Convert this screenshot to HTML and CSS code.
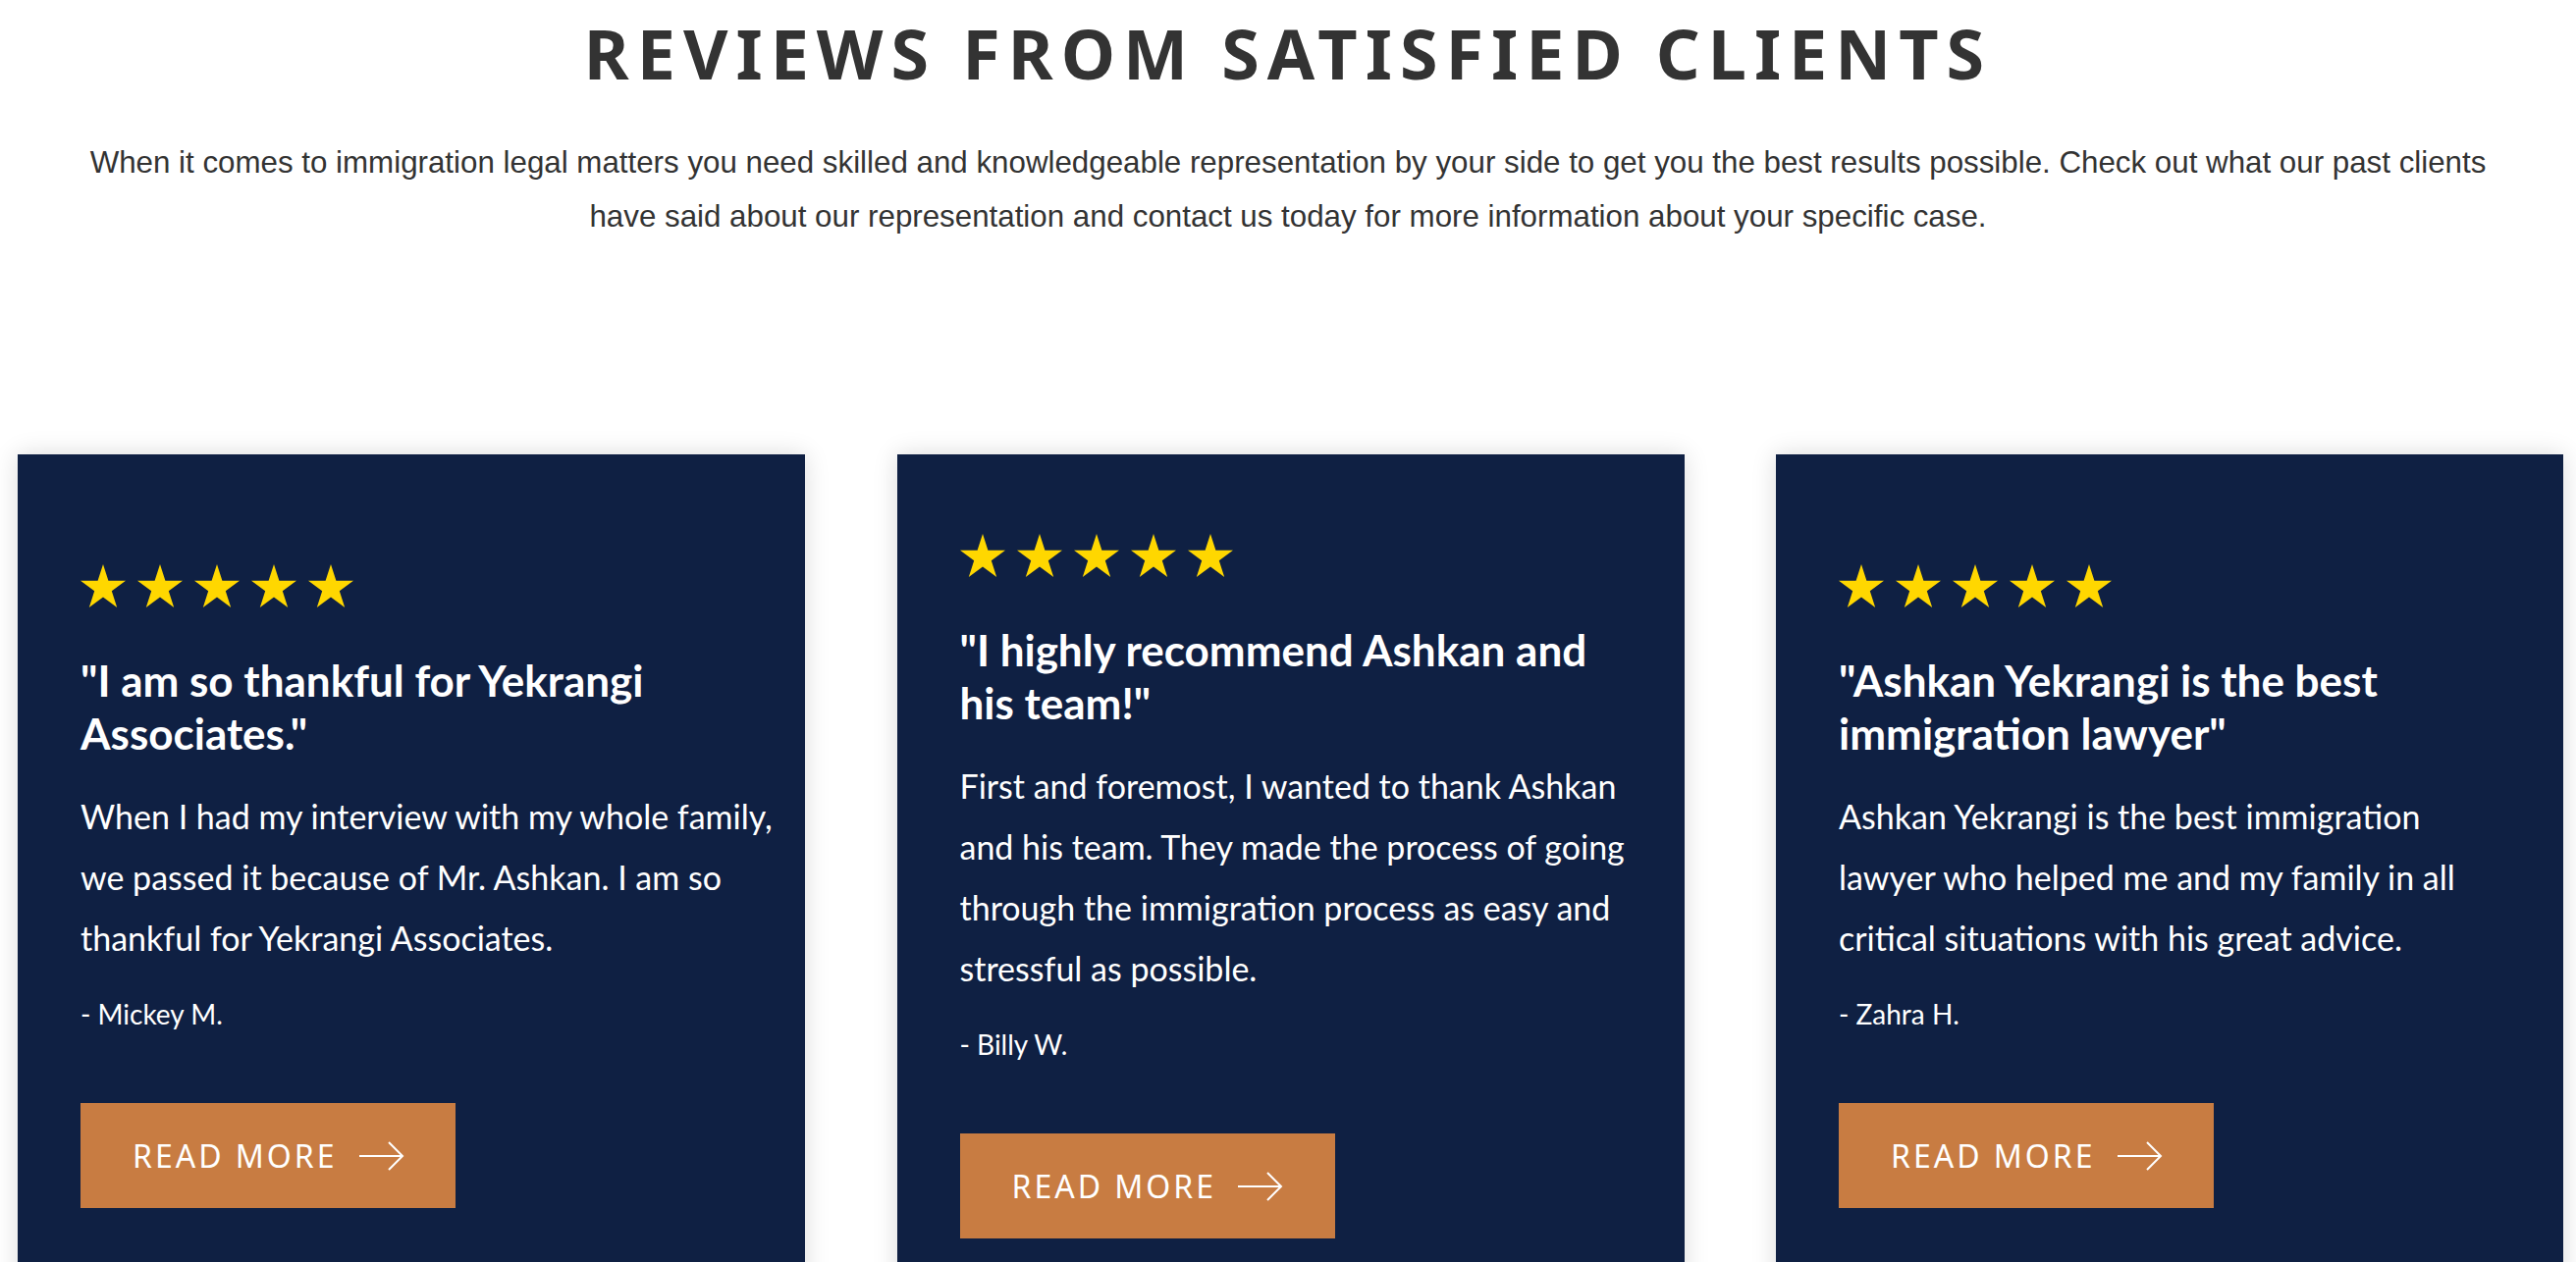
FILE: index.html
```html
<!DOCTYPE html>
<html lang="en">
<head>
<meta charset="utf-8">
<title>Reviews From Satisfied Clients</title>
<link rel="stylesheet" href="styles.css">
</head>
<body>
<svg class="defs" width="0" height="0" aria-hidden="true">
  <symbol id="star" viewBox="0 0 46 44">
    <polygon points="23,0 28.4,16.8 46,16.8 31.8,27.2 37.2,44 23,33.6 8.8,44 14.2,27.2 0,16.8 17.6,16.8"/>
  </symbol>
  <symbol id="arrow" viewBox="0 0 46 30">
    <path d="M0 15H44M30 1L44 15L30 29" fill="none" stroke="currentColor" stroke-width="2"/>
  </symbol>
</svg>
<section class="reviews">
  <h2 class="title">REVIEWS FROM SATISFIED CLIENTS</h2>
  <p class="intro">When it comes to immigration legal matters you need skilled and knowledgeable representation by your side to get you the best results possible. Check out what our past clients<br>have said about our representation and contact us today for more information about your specific case.</p>

  <div class="cards">
    <article class="card">
      <div class="stars">
        <svg class="star"><use href="#star"/></svg><svg class="star"><use href="#star"/></svg><svg class="star"><use href="#star"/></svg><svg class="star"><use href="#star"/></svg><svg class="star"><use href="#star"/></svg>
      </div>
      <h3 class="quote-title">"I am so thankful for Yekrangi<br>Associates."</h3>
      <p class="quote-body">When I had my interview with my whole family,<br>we passed it because of Mr. Ashkan. I am so<br>thankful for Yekrangi Associates.</p>
      <p class="author">- Mickey M.</p>
      <a class="btn" href="#">READ MORE <svg class="arrow"><use href="#arrow"/></svg></a>
    </article>

    <article class="card">
      <div class="stars">
        <svg class="star"><use href="#star"/></svg><svg class="star"><use href="#star"/></svg><svg class="star"><use href="#star"/></svg><svg class="star"><use href="#star"/></svg><svg class="star"><use href="#star"/></svg>
      </div>
      <h3 class="quote-title">"I highly recommend Ashkan and<br>his team!"</h3>
      <p class="quote-body">First and foremost, I wanted to thank Ashkan<br>and his team. They made the process of going<br>through the immigration process as easy and<br>stressful as possible.</p>
      <p class="author">- Billy W.</p>
      <a class="btn" href="#">READ MORE <svg class="arrow"><use href="#arrow"/></svg></a>
    </article>

    <article class="card">
      <div class="stars">
        <svg class="star"><use href="#star"/></svg><svg class="star"><use href="#star"/></svg><svg class="star"><use href="#star"/></svg><svg class="star"><use href="#star"/></svg><svg class="star"><use href="#star"/></svg>
      </div>
      <h3 class="quote-title">"Ashkan Yekrangi is the best<br>immigration lawyer"</h3>
      <p class="quote-body">Ashkan Yekrangi is the best immigration<br>lawyer who helped me and my family in all<br>critical situations with his great advice.</p>
      <p class="author">- Zahra H.</p>
      <a class="btn" href="#">READ MORE <svg class="arrow"><use href="#arrow"/></svg></a>
    </article>
  </div>
</section>
</body>
</html>
```

FILE: styles.css
```css
* { box-sizing: border-box; }

html, body {
  margin: 0;
  padding: 0;
  background: #ffffff;
}

.defs {
  position: absolute;
  width: 0;
  height: 0;
  overflow: hidden;
}

.reviews {
  display: flex;
  flex-direction: column;
  align-items: center;
  padding-top: 12px;
}

.title {
  margin: 0;
  font-family: "Noto Sans", "Open Sans", sans-serif;
  font-weight: 700;
  font-size: 70px;
  line-height: 84px;
  letter-spacing: 8px;
  color: #333333;
  text-align: center;
  white-space: nowrap;
}

.intro {
  margin: 42px 0 0;
  font-family: "Liberation Sans", Arial, sans-serif;
  font-size: 31.3px;
  line-height: 55px;
  color: #333333;
  text-align: center;
  white-space: nowrap;
}

.cards {
  align-self: stretch;
  margin-top: 215px;
  padding-left: 18px;
  display: grid;
  grid-template-columns: repeat(3, 802px);
  column-gap: 93.5px;
  align-items: stretch;
}

.card {
  background: #0f2043;
  box-shadow: 0 0 24px rgba(0, 0, 0, 0.14);
  padding: 81px 40px 81px 64px;
  display: flex;
  flex-direction: column;
  justify-content: center;
  align-items: flex-start;
  color: #ffffff;
  font-family: "Lato", "Noto Sans", sans-serif;
}

.stars {
  display: flex;
  gap: 12px;
  height: 44px;
}

.star {
  width: 46px;
  height: 44px;
  fill: #ffd700;
}

.quote-title {
  margin: 47px 0 0;
  font-weight: 700;
  font-size: 44px;
  line-height: 54px;
  white-space: nowrap;
}

.quote-body {
  margin: 27px 0 0;
  font-weight: 400;
  font-size: 34px;
  line-height: 62px;
  white-space: nowrap;
}

.author {
  margin: 24px 0 0;
  font-size: 28px;
  line-height: 45px;
}

.btn {
  margin-top: 68px;
  width: 382px;
  height: 107px;
  padding-left: 53px;
  display: flex;
  align-items: center;
  gap: 22px;
  background: #c87c42;
  color: #ffffff;
  text-decoration: none;
  font-family: "Noto Sans", "Open Sans", sans-serif;
  font-weight: 400;
  font-size: 32px;
  line-height: 1;
  letter-spacing: 3px;
}

.arrow {
  width: 46px;
  height: 30px;
  color: #ffffff;
  flex: none;
}
```
